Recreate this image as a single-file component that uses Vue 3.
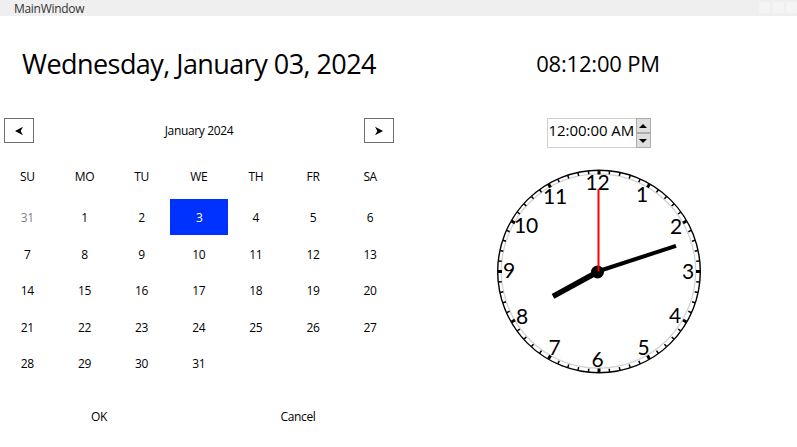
<script setup>
const weekdays = ['SU', 'MO', 'TU', 'WE', 'TH', 'FR', 'SA']
const days = [{ n: 31, muted: true }]
for (let n = 1; n <= 31; n++) days.push({ n, selected: n === 3 })

const cx = 102
const cy = 102
const ticks = Array.from({ length: 60 }, (_, i) => ({ angle: i * 6, major: i % 5 === 0 }))
const numerals = [
  { n: 12, x: 100.5, y: 21 }, { n: 1, x: 145, y: 32.5 }, { n: 2, x: 179, y: 65 },
  { n: 3, x: 191, y: 110 }, { n: 4, x: 178, y: 154 }, { n: 5, x: 146.5, y: 186 },
  { n: 6, x: 100.5, y: 198 }, { n: 7, x: 57.5, y: 186 }, { n: 8, x: 25, y: 154.5 },
  { n: 9, x: 12, y: 108.5 }, { n: 10, x: 29, y: 63.5 }, { n: 11, x: 58, y: 35 },
]
</script>

<template>
  <div class="window">
    <header class="titlebar">
      <span class="title">MainWindow</span>
      <div class="controls"><i></i><i></i><i></i></div>
    </header>
    <main class="content">
      <section class="date-pane">
        <h1>Wednesday, January 03, 2024</h1>
        <div class="month-bar">
          <button class="nav" aria-label="Previous month">
            <svg width="8" height="10" viewBox="0 0 8 10"><path d="M0 5 L8 .8 L5.6 5 L8 9.2 Z" /></svg>
          </button>
          <span class="month">January 2024</span>
          <button class="nav" aria-label="Next month">
            <svg width="8" height="10" viewBox="0 0 8 10"><path d="M8 5 L0 .8 L2.4 5 L0 9.2 Z" /></svg>
          </button>
        </div>
        <div class="weekdays">
          <span v-for="d in weekdays" :key="d">{{ d }}</span>
        </div>
        <div class="days">
          <span v-for="(d, i) in days" :key="i" :class="{ muted: d.muted, selected: d.selected }">{{ d.n }}</span>
        </div>
        <div class="actions">
          <span class="ok">OK</span>
          <span>Cancel</span>
        </div>
      </section>
      <section class="time-pane">
        <h2>08:12:00 PM</h2>
        <div class="spinner">
          <span class="value">12:00:00 AM</span>
          <div class="steps">
            <button aria-label="Up"><svg width="8" height="4" viewBox="0 0 8 4"><path d="M0 4 L4 0 L8 4Z" /></svg></button>
            <button aria-label="Down"><svg width="8" height="4" viewBox="0 0 8 4"><path d="M0 0 L4 4 L8 0Z" /></svg></button>
          </div>
        </div>
        <svg class="clock" width="204" height="205" viewBox="0 0 204 205">
          <circle :cx="cx" :cy="cy + 0.5" r="101.3" fill="#fff" stroke="#000" stroke-width="1.4" />
          <circle :cx="cx - 0.5" :cy="cy" r="97.2" fill="none" stroke="#d3d3d3" stroke-width="1.3" />
          <line
            v-for="t in ticks" :key="t.angle"
            :x1="cx" :x2="cx" :y1="cy - 100.5" :y2="cy - (t.major ? 96.5 : 97.3)"
            :stroke-width="t.major ? 3 : 1.5" stroke="#000"
            :transform="`rotate(${t.angle} ${cx} ${cy + 0.5})`"
          />
          <text v-for="m in numerals" :key="m.n" :x="m.x" :y="m.y" class="numeral">{{ m.n }}</text>
          <line x1="100.5" y1="103" x2="56" y2="127.3" stroke="#000" stroke-width="5.5" />
          <line x1="100.5" y1="102.5" x2="179" y2="76.8" stroke="#000" stroke-width="4" />
          <circle cx="100.5" cy="103" r="6.5" />
          <line x1="101.5" y1="20" x2="101.5" y2="102" stroke="#f00" stroke-width="2" />
        </svg>
      </section>
    </main>
  </div>
</template>

<style>
body { background: #fff; }
</style>

<style scoped>
.window {
  width: 797px;
  height: 447px;
  overflow: hidden;
  background: #fff;
  color: #000;
  font: 12px/16px "Open Sans", "Noto Sans", sans-serif;
  letter-spacing: -0.35px;
}
.titlebar {
  height: 16px;
  display: flex;
  justify-content: space-between;
  background: #efefef;
  color: #333;
  overflow: hidden;
}
.title { padding-left: 14px; line-height: 18px; letter-spacing: -0.3px; }
.controls { display: flex; gap: 2px; padding-top: 2px; }
.controls i { width: 11px; height: 11px; background: #f4f4f4; }
.controls i:first-child { margin-right: 1px; }
.content { display: grid; grid-template-columns: 398px 399px; }
h1, h2 { margin: 0; font-weight: 400; text-align: center; white-space: nowrap; }
h1 { font-size: 27px; line-height: 40px; padding-top: 28px; letter-spacing: -0.55px; }
.month-bar {
  display: flex;
  justify-content: space-between;
  align-items: center;
  height: 25px;
  margin-top: 34px;
  padding: 0 4px;
}
.nav {
  width: 30px;
  height: 25px;
  padding: 0;
  display: flex;
  align-items: center;
  justify-content: center;
  background: #fff;
  border: 1px solid #707070;
}
.weekdays, .days {
  display: grid;
  grid-template-columns: repeat(7, 57.14px);
  margin-left: -1.2px;
  text-align: center;
}
.weekdays { margin-top: 26px; line-height: 16px; }
.days { margin-top: 14px; grid-auto-rows: 36.6px; line-height: 37px; }
.days .muted { color: #838383; }
.days .selected { background: #0032ff; color: #fff; width: 58px; height: 36px; }
.actions { display: grid; grid-template-columns: 198px 200px; margin-top: 27px; text-align: center; }
.time-pane { display: flex; flex-direction: column; align-items: center; }
h2 { font-size: 22px; line-height: 40px; padding-top: 27px; padding-left: 1px; letter-spacing: -0.2px; }
.spinner {
  display: flex;
  box-sizing: border-box;
  width: 104px;
  height: 30px;
  margin-top: 35px;
  margin-left: 2px;
  border: 1px solid #cfcfcf;
  border-right: 0;
}
.value { width: 88px; padding-left: 1px; box-sizing: border-box; font-size: 15px; line-height: 23px; letter-spacing: -0.05px; white-space: nowrap; }
.steps { width: 15px; margin: -1px 0; display: flex; flex-direction: column; }
.steps button {
  flex: 1;
  padding: 0;
  display: flex;
  align-items: center;
  justify-content: center;
  background: #dedede;
  border: 1px solid #acacac;
}
.clock { margin-top: 21px; margin-left: 2px; display: block; }
.numeral { font: 21px Lato, "Open Sans", sans-serif; letter-spacing: -0.3px; text-anchor: middle; }
</style>
